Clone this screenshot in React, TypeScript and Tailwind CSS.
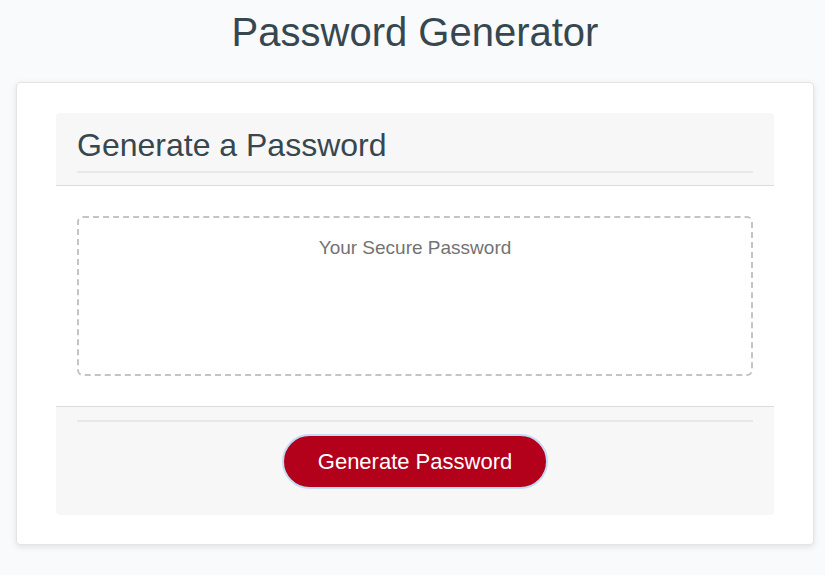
export default function App() {
  return (
    <div className="min-h-screen bg-[#f9fafb] font-['Liberation_Sans',Arial,sans-serif] text-[#37474f]">
      <h1 className="text-center text-[40px] leading-[46px] pt-[9px] pl-[5px] font-normal">Password Generator</h1>
      <div className="ml-4 mr-[11px] mt-[27px] bg-white border border-[#e4e4e4] rounded-[4px] shadow-[0_2px_6px_rgba(0,0,0,0.10)] px-[39px] pt-[30px] pb-[29px]">
        <div className="rounded-[4px] bg-[#f7f7f7] overflow-hidden">
          <div className="px-[21px] pt-[13px] border-b border-[#dcdcdc]">
            <h2 className="text-[32px] leading-[38px] font-normal text-[#37474f]">Generate a Password</h2>
            <div className="mt-[7px] h-[2px] bg-[#e8e8e8]" />
            <div className="h-[12px]" />
          </div>
          <div className="bg-white px-[21px] py-[30px]">
            <div className="h-[160px] border-2 border-dashed border-[#c4c4c4] rounded-[6px] pt-[18px] text-center text-[19px] leading-[24px] text-[#737373]">
              Your Secure Password
            </div>
          </div>
          <div className="border-t border-[#dcdcdc] px-[21px] pt-[13px] pb-[26px]">
            <div className="h-[2px] bg-[#e8e8e8]" />
            <div className="flex justify-center mt-[12px]">
              <button className="h-[55px] w-[266px] rounded-full bg-[#b3001b] text-white text-[22px] border-2 border-[#c2dcf5]">
                Generate Password
              </button>
            </div>
          </div>
        </div>
      </div>
    </div>
  );
}
